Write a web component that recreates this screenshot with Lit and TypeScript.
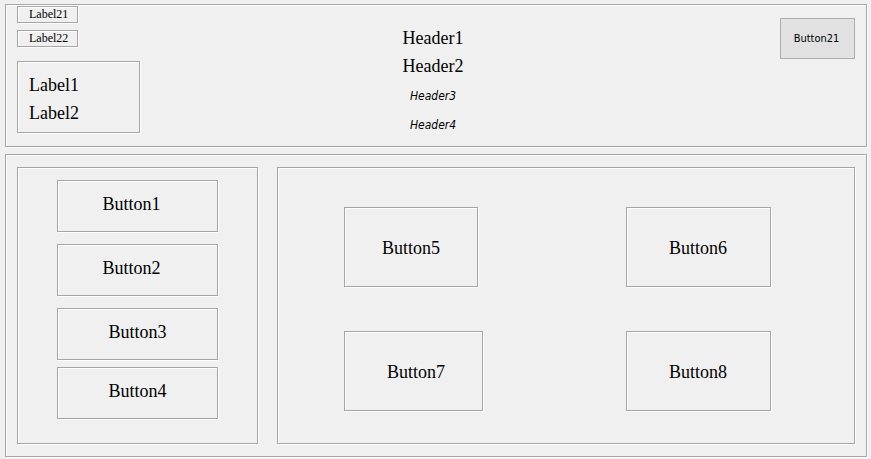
import { LitElement, html, css } from "lit";
import { customElement } from "lit/decorators.js";

@customElement("app-root")
export class AppRoot extends LitElement {
  static styles = css`
    :host {
      display: block;
      box-sizing: border-box;
      min-height: 100vh;
      padding: 4px 4px 2px 5px;
      background: #f0f0f0;
      color: #000;
      font-family: "Liberation Serif", "Times New Roman", serif;
      font-size: 18px;
    }
    * {
      box-sizing: border-box;
    }
    /* Etched group-box frame: grey line with a white highlight */
    .frame {
      border: 1px solid #a5a5a5;
      box-shadow: 1px 1px 0 #fff, inset 1px 1px 0 #fff;
    }
    .top {
      display: grid;
      grid-template-columns: 1fr auto 1fr;
      padding: 1px 11px 6px;
    }
    .labels {
      display: flex;
      flex-direction: column;
      align-items: flex-start;
      gap: 7px;
    }
    .tag {
      padding: 0 9px 0 11px;
      font-size: 12px;
      line-height: 15px;
    }
    .pair {
      margin-top: 7px;
      padding: 9px 60px 5px 11px;
      line-height: 28px;
    }
    .line {
      display: block;
    }
    .titles {
      padding: 18px 6px 0 0;
      text-align: center;
      line-height: 28px;
    }
    .title {
      margin: 0;
      font-size: 18px;
      font-weight: normal;
    }
    .subtitles {
      padding-top: 2px;
      font: italic 12px/29px "DejaVu Sans Condensed", "DejaVu Sans", sans-serif;
    }
    .subtitle {
      margin: 0;
    }
    button {
      font: inherit;
      color: inherit;
      background: transparent;
      border-radius: 0;
      margin: 0;
      padding: 0;
      text-align: center;
      white-space: nowrap;
    }
    .action {
      justify-self: end;
      margin-top: 12px;
      padding: 0 14px 0 12px;
      height: 41px;
      min-width: 75px;
      border: 1px solid #adadad;
      background: #e1e1e1;
      font: 11px "DejaVu Sans Condensed", "DejaVu Sans", sans-serif;
    }
    .bottom {
      display: grid;
      grid-template-columns: 241fr 578fr;
      gap: 19px;
      margin-top: 7px;
      padding: 12px 11px;
    }
    .side {
      display: flex;
      flex-direction: column;
      gap: 12px;
      padding: 12px 39px 24px;
    }
    .group {
      display: flex;
      flex-direction: column;
      gap: 12px;
    }
    .tight {
      gap: 7px;
    }
    .item {
      height: 52px;
      padding-bottom: 4px;
    }
    .shifted {
      padding-right: 12px;
    }
    .board {
      display: grid;
      grid-template-columns: 1fr 1fr;
      gap: 44px 54px;
      align-content: start;
      justify-items: start;
      padding: 39px 0 32px 66px;
    }
    .tile {
      height: 80px;
      padding: 2px 43px 0 42px;
    }
    .narrow {
      padding: 2px 37px 0;
    }
    .medium {
      padding: 2px 37px 0 42px;
    }
  `;

  render() {
    return html`
      <header class="top frame">
        <div class="labels">
          <span class="tag frame">Label21</span>
          <span class="tag frame">Label22</span>
          <div class="pair frame">
            <span class="line">Label1</span>
            <span class="line">Label2</span>
          </div>
        </div>
        <div class="titles">
          <h1 class="title">Header1</h1>
          <h2 class="title">Header2</h2>
          <div class="subtitles">
            <p class="subtitle">Header3</p>
            <p class="subtitle">Header4</p>
          </div>
        </div>
        <button class="action" type="button">Button21</button>
      </header>
      <main class="bottom frame">
        <nav class="side frame">
          <div class="group">
            <button class="item shifted frame" type="button">Button1</button>
            <button class="item shifted frame" type="button">Button2</button>
          </div>
          <div class="group tight">
            <button class="item frame" type="button">Button3</button>
            <button class="item frame" type="button">Button4</button>
          </div>
        </nav>
        <section class="board frame">
          <button class="tile narrow frame" type="button">Button5</button>
          <button class="tile frame" type="button">Button6</button>
          <button class="tile medium frame" type="button">Button7</button>
          <button class="tile frame" type="button">Button8</button>
        </section>
      </main>
    `;
  }
}
